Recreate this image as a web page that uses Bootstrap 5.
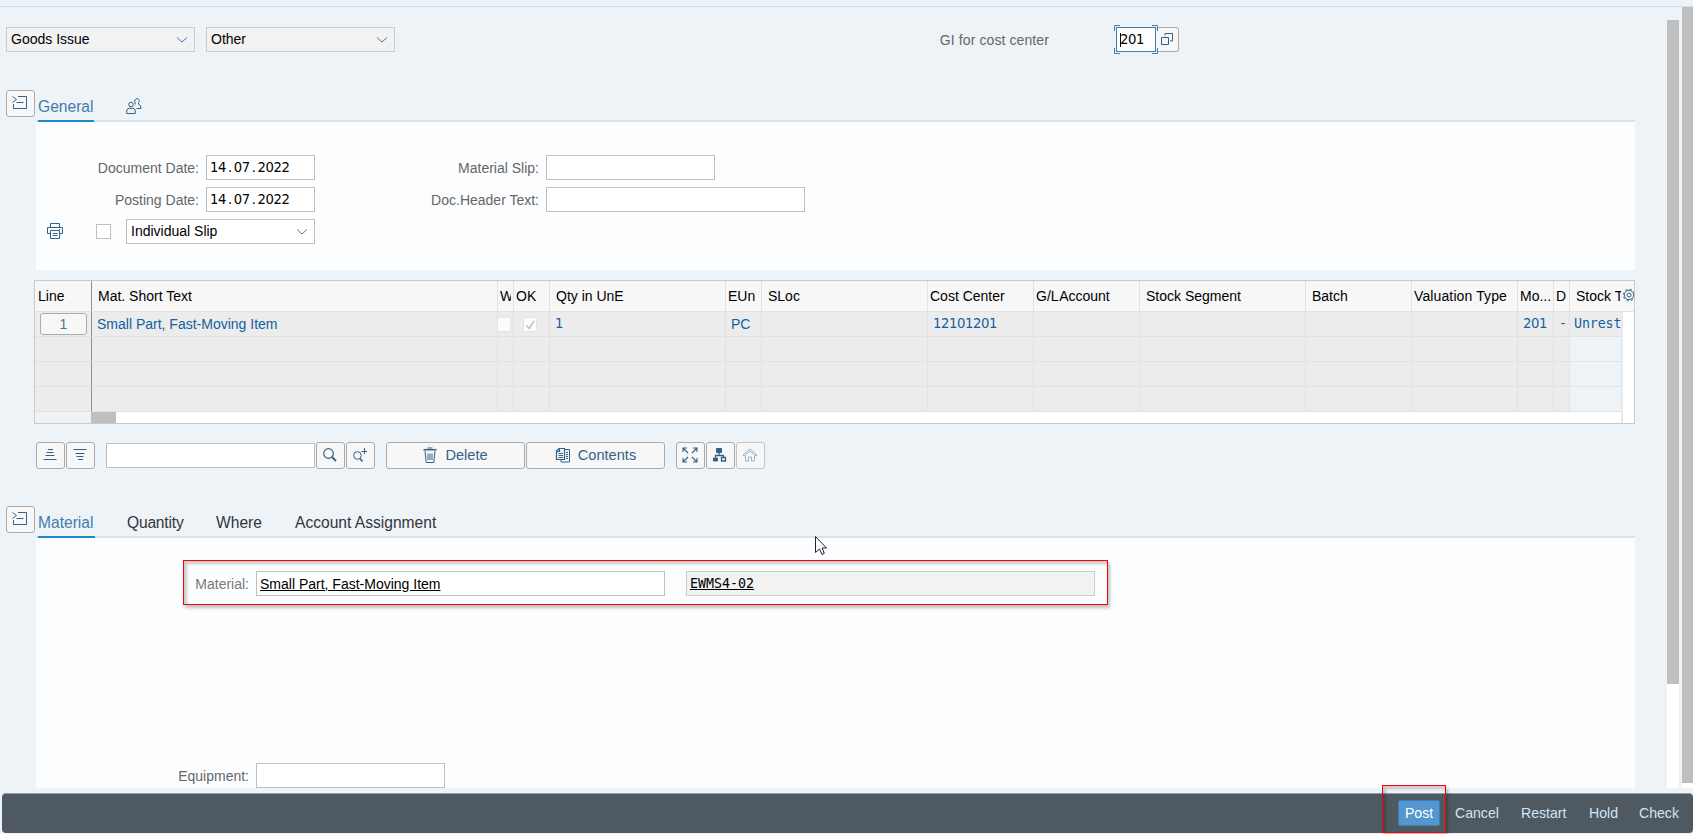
<!DOCTYPE html>
<html lang="en">
<head>
<meta charset="utf-8">
<title>Goods Issue</title>
<link href="https://cdn.jsdelivr.net/npm/bootstrap@5.3.0/dist/css/bootstrap.min.css" rel="stylesheet">
<style>
body{background:#eef3f8;font:14px/23px "Liberation Sans",Arial,sans-serif;color:#000;height:834px;overflow:hidden;position:relative}
svg{display:block;flex:none;fill:none;stroke:#346187;stroke-width:1}
.topline{height:7px;border-bottom:1px solid #d0dfee}
.workarea{height:781px}
.page-col{width:1635px}
.fld{height:25px;border:1px solid #bfbfbf;border-radius:0;background:#fff;padding:0 4px 0 3px;line-height:21px;font-size:14px;color:#000;white-space:nowrap;display:flex;align-items:center;flex:none}
.fld.ro{background:#f2f2f2;border-color:#ccc}
.fld.pick{padding-left:4px}
.fld svg{margin-left:auto;margin-right:1px;stroke:#427cac}
.w189{width:189px}.w109{width:109px}.w169{width:169px}.w259{width:259px}.w409{width:409px}
.lbl{color:#666;text-align:right;padding-right:7px;flex:none;height:25px;line-height:26px;white-space:nowrap}
.sap-btn{height:27px;width:29px;border:1px solid #ababab;border-radius:3px;background:#f7f7f7;color:#346187;padding:0 1px 1px 0;display:flex;align-items:center;justify-content:center;flex:none;font-size:14.6px;line-height:24px}
.sap-btn.wide{width:139px;gap:8px;padding:0 0 1px}
.num{font-family:"DejaVu Sans",sans-serif;font-size:13.2px;letter-spacing:-.4px}
.num .dot{padding:0 2px}
.mono{font-family:"DejaVu Sans Mono",monospace;font-size:13.3px}
.toprow{margin:20px 0 0 6px;height:25px}
.focusbox{position:relative;width:40px;border:1px solid #427cac}
.focusbox svg{position:absolute;left:-3px;top:-3px;margin:0;stroke:#427cac}
.caret{width:1px;height:14px;background:#000}
.strip{height:32px;padding-left:6px}
.strip .nav{flex:none;width:1599px;margin-left:1px;border-bottom:2px solid #d7e4f0;height:32px;padding-left:2px}
.strip .nav-link{padding:5px 0 0;height:32px;font-size:15.6px;line-height:23px;color:#32363a;border-bottom:2px solid transparent;white-space:nowrap}
.strip .nav-link.active{color:#427cac;border-color:#1f8ac9}
.panel{background:#fcfdff;width:1599px;margin-left:36px}
.p1{height:148px;padding-top:33px;gap:7px}
.chk{width:15px;height:15px;border:1px solid #bfbfbf;background:#fff}
.gridbox{margin:10px 0 0 34px;width:1601px;height:144px;border:1px solid #c9cacc;background:#eef3f8}
.g-tab{width:1599px;table-layout:fixed;border-collapse:separate;border-spacing:0}
.g-tab th,.g-tab td{padding:0 0 0 5px;overflow:hidden;white-space:nowrap;border-right:1px solid #e2e2e2;border-bottom:1px solid #e2e2e2;font-weight:400;height:25px;line-height:24px;background:#ececec;color:#0f61a4}
.g-tab th{height:31px;background:#f7f7f7;color:#000;line-height:28px}
.g-tab tr>:first-child{border-right-color:#929292}
.g-tab .free{background:#eef3f8}
.g-tab .vs{background:#fff;border-left:2px solid #e6eaee;border-bottom:0;border-right:0}
.linebtn{height:22px;width:47px;border:1px solid #ababab;border-radius:3px;background:#f7f7f7;color:#5b7186;text-align:center;line-height:20px}
.minichk{width:14px;height:15px;background:#fcfcfc;border:1px solid #e4e4e4}
.hbar{height:11px}
.tools{margin:18px 0 0 36px;gap:1px}
.p2{height:250px;padding-top:33px}
.red{position:absolute;border:1px solid #f00;box-shadow:2px 3px 3px rgba(0,0,0,.24),inset 3px 3px 3px rgba(0,0,0,.2);pointer-events:none}
.foot{margin:5px 0 0 2px;height:40px;background:#4f5962;border-top:1px solid #8e9ca8;border-radius:4px;padding:0 13px 1px 0;color:#cfe4f5;font-size:14.1px;line-height:24px}
.post{height:26px;width:42px;border:1px solid #3a7ebd;background:#5496cd;color:#fff;border-radius:2px;text-align:center}
.cursor{position:absolute;left:815px;top:536px}
</style>
</head>
<body>
<div class="topline"></div>
<div class="workarea d-flex">
 <div class="page-col">
  <div class="toprow d-flex">
   <div class="fld ro pick w189">Goods Issue<svg width="14" height="8"><path d="M2 1.500l5 4.500 5-4.500"/></svg></div>
   <div class="fld ro pick w189" style="margin-left:11px">Other<svg width="14" height="8"><path d="M2 1.500l5 4.500 5-4.500"/></svg></div>
   <div class="lbl" style="width:662px;padding-right:8px;letter-spacing:.1px">GI for cost center</div>
   <div class="fld focusbox" style="margin-left:59px"><span class="caret"></span><span class="num" style="margin-left:-1px">201</span><svg width="44" height="29"><path d="M.5 6V.5H6M38 .5h5.500V6M43.500 23v5.500H38M6 28.500H.500V23"/></svg></div>
   <div class="sap-btn" style="width:23px;height:25px;border-left:0"><svg width="14" height="14"><path d="M1.500 5.500h7v7h-7zM5 3.500v-2h7.500v7.500H10"/></svg></div>
  </div>
  <div class="strip d-flex" style="margin-top:38px">
   <div class="sap-btn"><svg width="16" height="16"><path d="M.5 1.500l4 3-4 3M6 1.500h8.500v12H1.500V9M4.500 7.500h7"/></svg></div>
   <div class="nav"><a class="nav-link active" style="width:56px">General</a>
    <a class="nav-link" style="margin-left:32px;padding-top:8px"><svg width="16" height="16"><circle cx="5" cy="6.500" r="2.300"/><path d="M.7 15.500V13q0-2.500 2.700-3l1.600.8 1.600-.8q2.700.5 2.700 3v2.500zM9.300 6.500V5q-.6-.8-.6-2a2.300 2.300 0 1 1 3.800 1.700v1.500q2.500.5 2.500 4.300h-4.500"/></svg></a></div>
  </div>
  <div class="panel p1 d-flex flex-column">
   <div class="d-flex"><div class="lbl" style="width:170px">Document Date:</div><div class="fld w109"><span class="num">14<span class="dot">.</span>07<span class="dot">.</span>2022</span></div><div class="lbl" style="width:231px">Material Slip:</div><div class="fld w169"></div></div>
   <div class="d-flex"><div class="lbl" style="width:170px">Posting Date:</div><div class="fld w109"><span class="num">14<span class="dot">.</span>07<span class="dot">.</span>2022</span></div><div class="lbl" style="width:231px">Doc.Header Text:</div><div class="fld w259"></div></div>
   <div class="d-flex align-items-center"><svg width="16" height="16" style="margin:-2px 0 0 11px"><path d="M3.500 4.500v-4h9v4M3.500 10.500h-3v-6h15v6h-3M3.500 7.500h9v8h-9zM5.500 10.500h5M5.500 12.500h5M12 6.500h1"/></svg><span class="chk" style="margin-left:33px"></span><div class="fld pick w189" style="margin-left:15px">Individual Slip<svg width="14" height="8"><path d="M2 1.500l5 4.500 5-4.500"/></svg></div></div>
  </div>
  <div class="gridbox">
   <table class="g-tab">
    <colgroup><col style="width:57px"><col style="width:406px"><col style="width:16px"><col style="width:36px"><col style="width:176px"><col style="width:36px"><col style="width:166px"><col style="width:106px"><col style="width:106px"><col style="width:166px"><col style="width:106px"><col style="width:106px"><col style="width:36px"><col style="width:16px"><col style="width:51px"><col></colgroup>
    <tr><th style="padding-left:3px">Line</th><th style="padding-left:6px">Mat. Short Text</th><th style="padding-left:2px"><div class="overflow-hidden" style="width:11px">W</div></th><th style="padding-left:2px">OK</th><th style="padding-left:6px">Qty in UnE</th><th style="padding-left:2px">EUn</th><th style="padding-left:6px">SLoc</th><th style="padding-left:2px">Cost Center</th><th style="padding-left:2px;word-spacing:-2px">G/L Account</th><th style="padding-left:6px">Stock Segment</th><th style="padding-left:6px">Batch</th><th style="padding-left:2px;letter-spacing:.12px">Valuation Type</th><th style="padding-left:2px">Mo...</th><th style="padding-left:2px">D</th><th style="padding-left:6px;border-right:0">Stock T</th><th class="p-0 border-end-0"><svg width="14" height="14" style="margin:-3px 0 0 1px"><circle cx="7" cy="7" r="4.700"/><circle cx="7" cy="7" r="2"/><circle cx="7" cy="7" r="5.800" stroke-dasharray="2.200 2.350"/></svg></th></tr>
    <tr><td><div class="linebtn">1</div></td><td>Small Part, Fast-Moving Item</td><td class="p-0"><div class="minichk" style="margin-left:-1px"></div></td><td><div class="minichk" style="margin-left:4px"><svg width="12" height="13" style="stroke:#b4c6d6;stroke-width:1.600"><path d="M2.500 7.500l2.800 3L10 3"/></svg></div></td><td class="num">1</td><td>PC</td><td></td><td class="num">12101201</td><td></td><td></td><td></td><td></td><td class="num">201</td><td class="mono">-</td><td class="mono border-end-0" style="letter-spacing:-.1px;padding-left:4px">Unrest</td><td class="vs" rowspan="4"></td></tr>
    <tr><td></td><td></td><td></td><td></td><td></td><td></td><td></td><td></td><td></td><td></td><td></td><td></td><td></td><td></td><td class="free border-end-0"></td></tr>
    <tr><td></td><td></td><td></td><td></td><td></td><td></td><td></td><td></td><td></td><td></td><td></td><td></td><td></td><td></td><td class="free border-end-0"></td></tr>
    <tr><td></td><td></td><td></td><td></td><td></td><td></td><td></td><td></td><td></td><td></td><td></td><td></td><td></td><td></td><td class="free border-end-0"></td></tr>
   </table>
   <div class="hbar d-flex"><div style="width:56px"></div><div style="width:25px;background:#bfbfbf"></div><div style="width:1505px;background:#fff"></div><div class="flex-fill" style="background:#fff;border-left:2px solid #e6eaee"></div></div>
  </div>
  <div class="tools d-flex">
   <div class="sap-btn"><svg width="14" height="14"><path d="M5 1.500h5M3.500 4.500h7M2.500 7.500h9M.5 11.500h13"/></svg></div>
   <div class="sap-btn"><svg width="14" height="14"><path d="M.5 1.500h13M2.500 5.500h9M3.500 8.500h7M5 11.500h5"/></svg></div>
   <div class="fld align-self-center" style="width:209px;margin-left:10px"></div>
   <div class="sap-btn"><svg width="16" height="16"><circle cx="6.500" cy="6.500" r="4.800" stroke-width="1.200"/><path d="M10 10l4 4" stroke-width="1.800"/></svg></div>
   <div class="sap-btn"><svg width="16" height="16"><circle cx="5.500" cy="8.500" r="3.800"/><path d="M8 11.500l2.500 3" stroke-width="1.600"/><path d="M12.500 1v6M9.500 4.500h5.500"/></svg></div>
   <div class="sap-btn wide" style="margin-left:10px"><svg width="14" height="16"><path d="M.5 2.700h13" stroke-width="1.500"/><path d="M4.500 1h5M2 4l1.200 11.500h7.600L12 4M5 6.500v6.500M7 6.500v6.500M9 6.500v6.500"/></svg>Delete</div>
   <div class="sap-btn wide" style="gap:7px"><svg width="16" height="16"><path d="M4 1.500h5.500v11H1.500V4zM4.500 1.500v3H2M3.500 6.500h4.500M3.500 8.500h4.500M3.500 10.500h4.500" stroke-width="1.200"/><path d="M9.500 2.500h5v12.500H6v-2.500M11 5.500h2M11 7.500h2M11 9.500h2M11 11.500h2"/></svg>Contents</div>
   <div class="sap-btn" style="margin-left:10px"><svg width="16" height="16"><path d="M5 1H1v4M1 1l5 5M11 1h4v4M15 1l-5 5M5 15H1v-4M1 15l5-5M11 15h4v-4M15 15l-5-5" stroke-width="1.100"/></svg></div>
   <div class="sap-btn"><svg width="16" height="16"><path d="M4.500 1.500h5v4h-5zM1.500 11h4v3h-4z" fill="#346187"/><path d="M9.500 10.500h4v3.500h-4zM7 6v2.500M3.500 10.500v-2h8v2" stroke-width="1.300"/></svg></div>
   <div class="sap-btn" style="border-color:#c4c4c4"><svg width="16" height="16" style="stroke:#9cb3c7"><path d="M1 8L8 1.800 15 8l-1 1L8 4 2 9zM3.500 8.500v5.500h3v-4h3v4h3V8.500"/></svg></div>
  </div>
  <div class="strip d-flex" style="margin-top:37px">
   <div class="sap-btn"><svg width="16" height="16"><path d="M.5 1.500l4 3-4 3M6 1.500h8.500v12H1.500V9M4.500 7.500h7"/></svg></div>
   <div class="nav"><a class="nav-link active" style="width:57px">Material</a><a class="nav-link" style="margin-left:32px;width:57px;letter-spacing:-.2px">Quantity</a><a class="nav-link" style="margin-left:32px;width:47px">Where</a><a class="nav-link" style="margin-left:32px">Account Assignment</a></div>
  </div>
  <div class="panel p2 d-flex flex-column justify-content-between">
   <div class="d-flex"><div class="lbl" style="width:220px;color:#7a7a7a">Material:</div><div class="fld w409 text-decoration-underline" style="padding-top:1px">Small Part, Fast-Moving Item</div><div class="fld ro w409" style="margin-left:21px"><span class="mono text-decoration-underline">EWMS4-02</span></div></div>
   <div class="d-flex" style="height:25px"><div class="lbl" style="width:220px">Equipment:</div><div class="fld w189"></div></div>
  </div>
 </div>
 <div style="margin:13px 0 0 32px;width:12px;background:#fff"><div style="height:664px;background:#bfbfbf"></div></div>
 <div style="margin-left:3px;width:11px;background:#fff"><div style="height:776px;background:#bfbfbf"></div></div>
</div>
<div class="foot d-flex justify-content-end align-items-center">
 <div class="post">Post</div><div style="margin-left:15px;width:66px">Cancel</div><div style="width:68px">Restart</div><div style="width:50px">Hold</div><div style="width:41px">Check</div>
</div>
<div class="red" style="left:183px;top:560px;width:925px;height:45px"></div>
<div class="red" style="left:1382px;top:785px;width:64px;height:48px"></div>
<svg class="cursor" width="13" height="20"><path d="M.5.500v16l4-3.500 2.500 5.500 2.300-1.200L7 12h4.500z" style="fill:#fff;stroke:#223"/></svg>
<script src="https://cdn.jsdelivr.net/npm/bootstrap@5.3.0/dist/js/bootstrap.bundle.min.js"></script>
</body>
</html>
